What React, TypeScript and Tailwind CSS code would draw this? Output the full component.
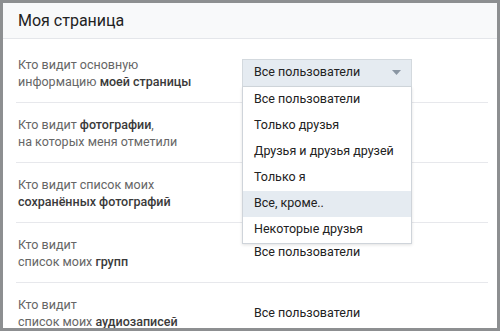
import React from "react";

const B = ({ children }: { children: React.ReactNode }) => (
  <span className="font-medium text-[#3a3a3a]">{children}</span>
);

const rows: { l1: React.ReactNode; l2: React.ReactNode; v: boolean }[] = [
  { l1: "Кто видит основную", l2: <>информацию <B>моей страницы</B></>, v: false },
  { l1: <>Кто видит <B>фотографии</B>,</>, l2: "на которых меня отметили", v: false },
  { l1: "Кто видит список моих", l2: <B>сохранённых фотографий</B>, v: false },
  { l1: "Кто видит", l2: <>список моих <B>групп</B></>, v: true },
  { l1: "Кто видит", l2: <>список моих <B>аудиозаписей</B></>, v: true },
];

const items = [
  "Все пользователи",
  "Только друзья",
  "Друзья и друзья друзей",
  "Только я",
  "Все, кроме..",
  "Некоторые друзья",
];

export default function App() {
  return (
    <div
      className="w-[500px] h-[331px] bg-[#8d8f91] p-[3px] overflow-hidden"
      style={{ fontFamily: "Roboto, 'Open Sans', Arial, sans-serif" }}
    >
      <div className="relative w-full h-full bg-white overflow-hidden">
        <div className="h-[36px] bg-[#f8f9fa] border-b border-[#e4e6ea] flex items-center pl-[15px] text-[16px] text-[#222]">
          Моя страница
        </div>
        <div className="pt-[4px] pl-[13px] pr-[9px]">
          {rows.map((r, i) => (
            <div
              key={i}
              className={`h-[60px] flex items-center ${i < rows.length - 1 ? "border-b border-[#e7e8ec]" : ""}`}
            >
              <div className="w-[226px] pl-[2px] text-[12.5px] leading-[17px] text-[#666]">
                <div>{r.l1}</div>
                <div>{r.l2}</div>
              </div>
              {i === 0 ? (
                <div className="relative">
                  <div className="w-[170px] h-[28px] bg-[#e5ebf1] border border-[#d3d9de] flex items-center pl-[11px] pr-[10px] text-[12.5px] text-[#222]">
                    <span className="flex-1">Все пользователи</span>
                    <svg width="9" height="5" viewBox="0 0 9 5">
                      <path d="M0 0 L9 0 L4.5 5 Z" fill="#8a96a3" />
                    </svg>
                  </div>
                  <div className="absolute left-0 top-[28px] w-[170px] bg-white border border-t-0 border-[#cfd4da] shadow-[0_1px_3px_rgba(0,0,0,0.12)] z-10">
                    {items.map((it, j) => (
                      <div
                        key={j}
                        className={`h-[26px] flex items-center pl-[11px] text-[12.5px] text-[#222] ${j === 4 ? "bg-[#e5ebf1]" : ""}`}
                      >
                        {it}
                      </div>
                    ))}
                  </div>
                </div>
              ) : r.v ? (
                <div className="pl-[12px] text-[12.5px] text-[#222]">Все пользователи</div>
              ) : null}
            </div>
          ))}
        </div>
      </div>
    </div>
  );
}
